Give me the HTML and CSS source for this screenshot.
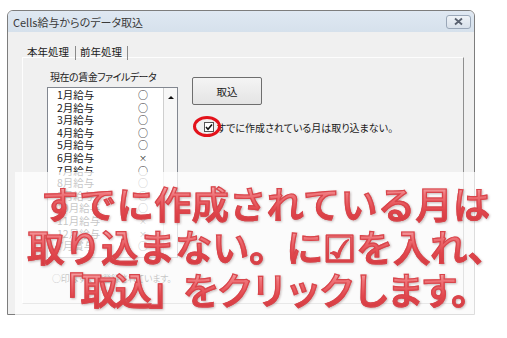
FILE: index.html
```html
<!DOCTYPE html>
<html lang="ja">
<head>
    <meta charset="UTF-8">
    <title>Cells給与からのデータ取込</title>
    <link rel="stylesheet" href="styles.css">
</head>
<body>
    <div class="dialog">
        <div class="titlebar">
            <span class="title">Cells給与からのデータ取込</span>
            <span class="close">
                <svg width="11" height="9" viewBox="0 0 11 9"><path d="M2 1.5 L9 7.5 M9 1.5 L2 7.5" stroke="#5a6270" stroke-width="1.8" fill="none"/></svg>
            </span>
        </div>
        <div class="content">
            <div class="tabs">
                <span class="tab active">本年処理</span>
                <span class="tab">前年処理</span>
            </div>
            <div class="panel">
                <div class="left">
                    <div class="caption">現在の賃金ファイルデータ</div>
                    <div class="listbox">
                        <ul class="items">
                            <li><span>1月給与</span><span class="mark">○</span></li>
                            <li><span>2月給与</span><span class="mark">○</span></li>
                            <li><span>3月給与</span><span class="mark">○</span></li>
                            <li><span>4月給与</span><span class="mark">○</span></li>
                            <li><span>5月給与</span><span class="mark">○</span></li>
                            <li><span>6月給与</span><span class="mark small">×</span></li>
                            <li><span>7月給与</span><span class="mark">○</span></li>
                            <li><span>8月給与</span><span class="mark">○</span></li>
                            <li><span>9月給与</span><span class="mark">○</span></li>
                            <li><span>10月給与</span><span class="mark">○</span></li>
                            <li><span>11月給与</span><span class="mark small">×</span></li>
                            <li><span>12月給与</span><span class="mark small">×</span></li>
                            <li><span>7月賞与</span><span class="mark">○</span></li>
                        </ul>
                        <div class="scrollbar"><span class="up"></span></div>
                    </div>
                    <div class="note">○印はすでに登録されています。</div>
                </div>
                <div class="right">
                    <button class="import" type="button">取込</button>
                    <label class="check">
                        <span class="box">
                            <svg width="8" height="8" viewBox="0 0 8 8"><path d="M1 4 L3 6.2 L7 1.5" stroke="#111" stroke-width="1.6" fill="none"/></svg>
                        </span>
                        すでに作成されている月は取り込まない。
                        <span class="ring"></span>
                    </label>
                </div>
            </div>
        </div>
    </div>

    <div class="overlay">
        <div class="callout">
            <div class="line one">すでに作成されている月は</div>
            <div class="line">取り込まない。に☑を入れ、</div>
            <div class="line three">「取込」をクリックします。</div>
        </div>
    </div>
</body>
</html>
```

FILE: styles.css
```css
body {
    margin: 0;
    width: 507px;
    height: 338px;
    overflow: hidden;
    position: relative;
    background: #fff;
    font-family: "Noto Sans CJK JP", sans-serif;
    color: #1a1a1a;
}
.dialog {
    margin: 10px 0 0 7px;
    width: 468px;
    height: 305px;
    box-sizing: border-box;
    border: 1px solid #7d7d7d;
    border-radius: 6px 6px 0 0;
    background: #f0f0f0;
    overflow: hidden;
}
.titlebar {
    height: 21px;
    display: flex;
    align-items: center;
    justify-content: space-between;
    padding: 0 3px 0 5px;
    background: linear-gradient(#dfe8f2, #d6e1ec);
}
.title {
    font-size: 11px;
    color: #3a3a3a;
    font-feature-settings: "palt";
}
.close {
    width: 25px;
    height: 14px;
    box-sizing: border-box;
    border: 1px solid #9aa7b8;
    border-radius: 3px;
    background: linear-gradient(#eef2f7, #d8e0ea);
    display: flex;
    align-items: center;
    justify-content: center;
}
.content {
    padding: 14px 0 0 14px;
}
.tabs {
    display: flex;
    height: 11px;
    font-size: 10.5px;
    line-height: 11px;
}
.tab {
    padding: 0 5px 0 5px;
    border-right: 1px solid #8a8a8a;
    height: 14px;
}
.tab.active {
    padding-right: 6px;
}
.tab + .tab {
    padding: 0 5px 0 4px;
}
.panel {
    width: 442px;
    height: 247px;
    box-sizing: border-box;
    border-top: 1px solid #fdfdfd;
    border-left: 1px solid #fdfdfd;
    border-right: 1px solid #8f8f8f;
    border-bottom: 1px solid #a8a8a8;
    padding: 12px 0 0 24px;
    display: flex;
    gap: 14px;
}
.left {
    width: 131px;
}
.caption {
    margin-left: 3px;
    height: 14px;
    font-size: 10px;
    line-height: 14px;
    letter-spacing: -0.5px;
    font-feature-settings: "palt";
    white-space: nowrap;
}
.listbox {
    margin-top: 3px;
    height: 171px;
    box-sizing: border-box;
    border: 1px solid #828790;
    background: #fff;
    display: flex;
}
.items {
    flex: 1;
    list-style: none;
    margin: 0;
    padding: 1px 0 0 0;
}
.items li {
    display: grid;
    grid-template-columns: 86px 18px;
    height: 12.6px;
    font-size: 10.5px;
    line-height: 12.6px;
}
.items li span:first-child {
    padding-left: 9px;
}
.mark {
    text-align: center;
    font-size: 10px;
}
.mark.small {
    font-size: 8px;
}
.scrollbar {
    width: 13px;
    border-left: 1px solid #cfcfcf;
    background: #f7f7f7;
    display: flex;
    justify-content: center;
}
.up {
    margin-top: 8px;
    width: 0;
    height: 0;
    border-left: 3px solid transparent;
    border-right: 3px solid transparent;
    border-bottom: 3px solid #111;
}
.note {
    margin: 14px 0 0 5px;
    font-size: 9px;
    line-height: 14px;
    letter-spacing: -0.3px;
    font-feature-settings: "palt";
    white-space: nowrap;
}
.right {
    flex: 1;
}
.import {
    display: block;
    margin-top: 7px;
    width: 70px;
    height: 28px;
    border: 1px solid #6e6e6e;
    border-radius: 2px;
    background: linear-gradient(#f4f4f4, #e4e4e4);
    font-family: "Noto Sans CJK JP", sans-serif;
    font-size: 10.5px;
    color: #1a1a1a;
    padding: 0;
}
.check {
    position: relative;
    margin-top: 16px;
    height: 12px;
    display: flex;
    align-items: center;
    padding-left: 12px;
    gap: 3px;
    font-size: 10px;
    font-feature-settings: "palt";
    white-space: nowrap;
}
.box {
    width: 10px;
    height: 10px;
    box-sizing: border-box;
    border: 1px solid #555;
    background: #fff;
    display: flex;
    align-items: center;
    justify-content: center;
}
.ring {
    position: absolute;
    left: 1px;
    top: -5px;
    width: 28px;
    height: 21px;
    box-sizing: border-box;
    border: 3px solid #e3121b;
    border-radius: 50%;
}
.overlay {
    position: absolute;
    left: 15px;
    top: 172px;
    width: 492px;
    height: 166px;
    background: rgba(255, 255, 255, 0.74);
}
.callout {
    padding: 10px 0 0 10px;
    text-align: center;
    font-size: 37px;
    font-weight: 500;
    line-height: 43px;
    white-space: nowrap;
}
.line {
    display: block;
    height: 43px;
    background: linear-gradient(#f8c0c2 0%, #ee7378 30%, #e2474d 65%, #d3373e 100%);
    -webkit-background-clip: text;
    background-clip: text;
    color: transparent;
    -webkit-text-stroke: 1.2px #d8454b;
    filter: drop-shadow(1px 1.5px 1px rgba(80, 40, 40, 0.3));
}
.line.one {
    letter-spacing: 0.5px;
}
.line.three {
    letter-spacing: -3px;
}
```
